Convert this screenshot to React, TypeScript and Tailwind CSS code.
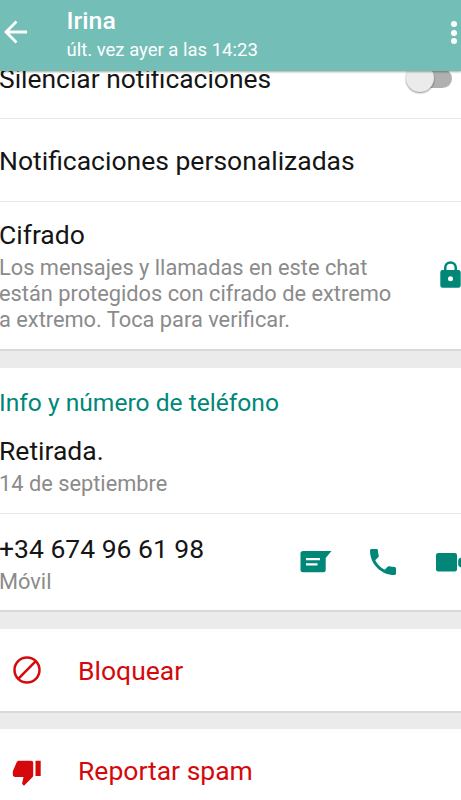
import React from "react";

function Gap({ h }: { h: string }) {
  return <div className={`${h} shrink-0 border-t-2 border-[#d9d9d9] bg-[#ebebeb]`} />;
}

export default function App() {
  return (
    <div className="flex h-[800px] w-[461px] flex-col overflow-hidden bg-white font-['Roboto',sans-serif] text-[26.5px] leading-[32px] whitespace-nowrap text-[#151515]">
      <header className="z-10 flex h-[71px] shrink-0 bg-[#73beb7] text-white shadow-[0_1px_2px_rgba(0,0,0,0.35)]">
        <svg className="mt-[20px] ml-[3px] h-6 w-6 shrink-0" viewBox="0 0 24 24" fill="none" stroke="currentColor" strokeWidth="2.800">
          <path d="M24 12H3M13.500 1.500L3 12l10.500 10.500" />
        </svg>
        <div className="ml-[39px] flex-1 pt-[5px]">
          <h1 className="ml-[0.5px] text-[24.8px] leading-[32px] font-medium">Irina</h1>
          <p className="mt-px ml-[0.5px] text-[18.5px] leading-6">últ. vez ayer a las 14:23</p>
        </div>
        <div className="mt-[21px] mr-[4px] flex flex-col gap-[2.5px]">
          <i className="h-[6px] w-[6px] rounded-full bg-white" />
          <i className="h-[6px] w-[6px] rounded-full bg-white" />
          <i className="h-[6px] w-[6px] rounded-full bg-white" />
        </div>
      </header>

      <section className="flex h-[48px] shrink-0 justify-between border-b border-[#e6e6e6]">
        <div className="-mt-[8px] -ml-px text-[26.4px]">Silenciar notificaciones</div>
        <div className="-mt-[9px] mr-[9px] flex h-[32px] w-[46px] items-center">
          <div className="z-[1] h-[28px] w-[28px] shrink-0 rounded-full bg-[#ebebeb] shadow-[0_1px_2px_rgba(0,0,0,0.45)]" />
          <div className="-ml-[14px] h-[19px] w-[32px] shrink-0 rounded-full bg-[#b0b0b0]" />
        </div>
      </section>

      <section className="h-[83px] shrink-0 border-b border-[#e6e6e6] pt-[26px]">
        <div className="-ml-px">Notificaciones personalizadas</div>
      </section>

      <section className="flex h-[147px] shrink-0 justify-between">
        <div className="-ml-px pt-[17px]">
          <div>Cifrado</div>
          <p className="mt-[4px] text-[21.8px] leading-[25.8px] text-[#8b8b8b]">
            Los mensajes y llamadas en este chat<br />
            están protegidos con cifrado de extremo<br />
            a extremo. Toca para verificar.
          </p>
        </div>
        <svg className="mt-[59px] h-[27px] w-[21px]" viewBox="0 0 21 27">
          <path fill="#008778" fillRule="evenodd" d="M4 9V6.700a6.500 6.500 0 0 1 13 0V9h1.500a2.200 2.200 0 0 1 2.200 2.200v13.300a2.200 2.200 0 0 1-2.200 2.200h-16a2.200 2.200 0 0 1-2.200-2.200V11.200A2.200 2.200 0 0 1 2.500 9zM6.500 9h8V6.700a4 4 0 0 0-8 0zM10.500 15.300a2.500 2.500 0 1 0 0 5a2.500 2.500 0 0 0 0-5z" />
        </svg>
      </section>
      <Gap h="h-[19px]" />

      <section className="h-[146px] shrink-0 border-b border-[#e6e6e6] pt-[19px]">
        <h2 className="-ml-px text-[24.6px] text-[#008778]">Info y número de teléfono</h2>
        <div className="mt-[16px] -ml-px">Retirada.</div>
        <div className="mt-[4px] -ml-px text-[21.8px] leading-[26px] text-[#8b8b8b]">14 de septiembre</div>
      </section>

      <section className="flex h-[96px] shrink-0 justify-between">
        <div className="-ml-px pt-[19px]">
          <div>+34 674 96 61 98</div>
          <div className="mt-[4px] text-[21.8px] leading-[26px] text-[#8b8b8b]">Móvil</div>
        </div>
        <div className="flex pt-[34px] text-[#008778]">
          <svg className="mt-[3px] h-[22px] w-[32px]" viewBox="0 0 32 22" fill="currentColor">
            <path fillRule="evenodd" d="M3 0H31.500L25.700 7V18.800a2.500 2.500 0 0 1-2.500 2.500H3A2.500 2.500 0 0 1 .5 18.800V2.500A2.500 2.500 0 0 1 3 0zM6 7v2.300h14V7zM6 12.300v2.300h11.500v-2.300z" />
          </svg>
          <svg className="mt-[1px] ml-[38px] h-[26px] w-[26px]" viewBox="3 3 18 18" fill="currentColor">
            <path d="M4 3h3.500c.55 0 1 .45 1 1 0 1.250.2 2.450.57 3.570.11.350.03.740-.25 1.020l-2.200 2.200c1.440 2.830 3.760 5.150 6.590 6.590l2.200-2.200c.28-.28.67-.36 1.020-.25 1.120.37 2.320.57 3.570.57.55 0 1 .45 1 1V20c0 .55-.45 1-1 1C10.610 21 3 13.390 3 4c0-.55.45-1 1-1z" />
          </svg>
          <svg className="mt-[5px] ml-[39px] h-[19px] w-[26px]" viewBox="0 0 26 19" fill="currentColor">
            <rect x="1" width="21" height="18.500" rx="2.200" />
            <path d="M26 4.500L24.500 5.300Q23.200 6 23.200 7.500v4Q23.200 13 24.500 13.700L26 14.500z" />
          </svg>
        </div>
      </section>
      <Gap h="h-[19px]" />

      <section className="flex h-[82px] shrink-0 pt-[26px] text-[#d5090c]">
        <svg className="mt-px ml-[13px] h-[28px] w-[28px]" viewBox="0 0 28 28" fill="none" stroke="currentColor" strokeWidth="2.500">
          <circle cx="14" cy="14" r="12.500" />
          <path d="M5.200 22.800L22.800 5.200" />
        </svg>
        <div className="ml-[37px]">Bloquear</div>
      </section>
      <Gap h="h-[18px]" />

      <section className="flex flex-1 pt-[26px] text-[#d5090c]">
        <svg className="mt-[5px] ml-[12px] h-[26px] w-[29px]" viewBox="0 0 29 26" fill="currentColor">
          <path d="M7 .8h12.200a2 2 0 0 1 2 2v12.600c0 .7-.3 1.300-.8 1.800L12 25.800l-1.300-1.300c-.5-.5-.6-.9-.5-1.500l1.300-6H3.200c-1.500 0-2.400-1.100-2.400-2.400v-2.800c0-.4.1-.8.2-1.100L4.700 2.300C5.100 1.400 5.900.8 7 .8zM23.500.8h5.200V16h-5.200z" />
        </svg>
        <div className="ml-[37px]">Reportar spam</div>
      </section>
    </div>
  );
}
